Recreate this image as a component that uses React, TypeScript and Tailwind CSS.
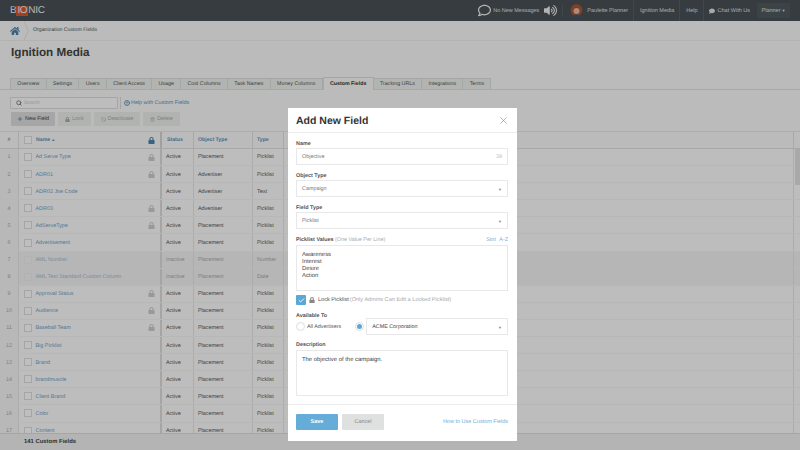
import { Search, Plus, Ban, Trash2, HelpCircle, X, Check } from "lucide-react";
import { FaHome, FaLock, FaVolumeUp, FaRegComment, FaComment } from "react-icons/fa";

const FONT = "[font-family:'Liberation_Sans',Arial,sans-serif] [text-rendering:geometricPrecision]";

const TABS = ["Overview", "Settings", "Users", "Client Access", "Usage", "Cost Columns", "Task Names", "Money Columns", "Custom Fields", "Tracking URLs", "Integrations", "Terms"];

const ROWS: { name: string; lock?: boolean; status?: string; object: string; type: string }[] = [
  { name: "Ad Serve Type", lock: true, object: "Placement", type: "Picklist" },
  { name: "ADR01", lock: true, object: "Advertiser", type: "Picklist" },
  { name: "ADR02 Joe Code", object: "Advertiser", type: "Text" },
  { name: "ADR03", lock: true, object: "Advertiser", type: "Picklist" },
  { name: "AdServeType", lock: true, object: "Placement", type: "Picklist" },
  { name: "Advertisement", object: "Placement", type: "Picklist" },
  { name: "AML Number", status: "Inactive", object: "Placement", type: "Number" },
  { name: "AML Test Standard Custom Column", status: "Inactive", object: "Placement", type: "Date" },
  { name: "Approval Status", lock: true, object: "Placement", type: "Picklist" },
  { name: "Audience", lock: true, object: "Placement", type: "Picklist" },
  { name: "Baseball Team", lock: true, object: "Placement", type: "Picklist" },
  { name: "Big Picklist", object: "Placement", type: "Picklist" },
  { name: "Brand", object: "Placement", type: "Picklist" },
  { name: "brandmuscle", object: "Placement", type: "Picklist" },
  { name: "Client Brand", object: "Placement", type: "Picklist" },
  { name: "Color", object: "Placement", type: "Picklist" },
  { name: "Content", object: "Placement", type: "Picklist" },
];

const COLS = "grid grid-cols-[19px_143px_32px_59px_31px_1fr]";

function Divider() {
  return <div className="mx-[5px] h-[21px] w-px bg-[#566065]" />;
}

function TopBar() {
  return (
    <div className="flex h-[21px] shrink-0 items-center bg-[#485055] text-[5.5px] text-[#dfe2e2]">
      <div className="ml-[10px] mt-[1px] flex items-center text-[10px] font-light leading-none tracking-[-0.3px] text-[#f0f0f0]">
        <span>B</span>
        <span className="bg-[#d9562a] px-[1px]">IO</span>
        <span>NIC</span>
      </div>
      <div className="ml-auto mr-[10px] flex h-full items-center [&>span]:pt-[2px]">
        <FaRegComment size={13} className="mr-[2px] text-[#f0f0f0]" />
        <span>No New Messages</span>
        <FaVolumeUp size={13} className="ml-[5px] text-[#f0f0f0]" />
        <div className="ml-[5px] mr-[7px] h-[12px] w-px bg-[#566065]" />
        <svg width="13" height="13" viewBox="0 0 13 13" className="mr-[4px]">
          <circle cx="6.5" cy="6" r="6" fill="#a5563a" />
          <circle cx="6.5" cy="7" r="3" fill="#e6b89c" />
          <rect x="4.5" y="10.5" width="4" height="2.5" fill="#3c5a78" />
        </svg>
        <span>Paulette Planner</span>
        <Divider />
        <span className="ml-[1px]">Ignition Media</span>
        <Divider />
        <span className="ml-[1px]">Help</span>
        <Divider />
        <FaComment size={6} className="mr-[3px]" />
        <span>Chat With Us</span>
        <div className="ml-[7px] flex h-[15px] w-[33px] items-center justify-center gap-[1px] bg-[#505a5f] pt-[1px]">
          Planner
          <span className="text-[4px]">▼</span>
        </div>
      </div>
    </div>
  );
}

function Breadcrumb() {
  return (
    <div className="flex h-[20px] shrink-0 items-center border-b border-[#ecefec] text-[5.2px] text-[#555]">
      <FaHome size={10} className="ml-[10px] text-[#4d83ad]" />
      <svg width="5" height="19" viewBox="0 0 5 19" className="ml-[4px] mr-[4px]">
        <path d="M0 0 L4.5 9.5 L0 19" fill="none" stroke="#e4e6e4" />
      </svg>
      <span className="pt-[1px]">Organization Custom Fields</span>
    </div>
  );
}

function Tabs() {
  return (
    <div className="mt-[33px] flex h-[12px] shrink-0 items-stretch border-b border-[#dfe2df] pl-[10px]">
      {TABS.map((t) => (
        <div
          key={t}
          className={`flex items-center border-r border-t border-[#dcdfdc] px-[6.3px] pt-[2px] text-[5.3px] first:border-l ${
            t === "Custom Fields" ? "relative -my-[1px] border-l bg-[#f8faf8] font-bold text-[#333]" : "bg-[#eef0ee] text-[#555]"
          }`}
        >
          {t}
        </div>
      ))}
    </div>
  );
}

function Toolbar() {
  return (
    <>
      <div className="mt-[7px] flex items-center pl-[10px]">
        <div className="flex h-[12px] w-[108px] items-center rounded-[1px] border border-[#dcdcdc] bg-[#fcfcfc] pl-[5px] text-[5px] text-[#ccc]">
          <Search size={6} strokeWidth={3} className="mr-[2px] text-[#666]" />
          <span className="pt-[1px]">Search</span>
        </div>
        <div className="ml-[2px] mr-[3px] h-[12px] w-px bg-[#dcdcdc]" />
        <HelpCircle size={6} className="mr-[1px] text-[#4d83ad]" strokeWidth={3} />
        <span className="text-[5.4px] text-[#5a93bf]">Help with Custom Fields</span>
      </div>
      <div className="mt-[3px] flex gap-[3px] pl-[11px] text-[5.4px] [&>div>span]:pt-[1px]">
        <div className="flex h-[14px] w-[44px] items-center justify-center gap-[2px] rounded-[1px] bg-[#dcdedc] text-[#444]">
          <Plus size={6} strokeWidth={3} className="text-[#4d83ad]" />
          <span>New Field</span>
        </div>
        <div className="flex h-[14px] w-[33px] items-center justify-center gap-[2px] rounded-[1px] bg-[#edefed] text-[#aaa]">
          <FaLock size={5} />
          <span>Lock</span>
        </div>
        <div className="flex h-[14px] w-[46px] items-center justify-center gap-[2px] rounded-[1px] bg-[#edefed] text-[#aaa]">
          <Ban size={5} />
          <span>Deactivate</span>
        </div>
        <div className="flex h-[14px] w-[37px] items-center justify-center gap-[2px] rounded-[1px] bg-[#edefed] text-[#aaa]">
          <Trash2 size={5} />
          <span>Delete</span>
        </div>
      </div>
    </>
  );
}

function Table() {
  return (
    <div className="relative mt-[5px] min-h-0 flex-1 overflow-hidden border-t border-[#e6e8e6]">
      <div className={`${COLS} h-[17px] border-b border-[#dfe1df] text-[5.2px] font-bold text-[#5a93bf]`}>
        <div className="flex items-center justify-center border-r border-[#dfe1df] pt-[1px] text-[#888]">#</div>
        <div className="flex items-center border-r-2 border-[#d5d7d5] pl-[5px]">
          <div className="mr-[4px] h-[8px] w-[8px] border border-[#ddd] bg-white" />
          <span className="pt-[1px]">Name</span>
          <span className="ml-[1px] text-[4px]">▲</span>
          <FaLock size={7} className="ml-auto mr-[5px] text-[#4d83ad]" />
        </div>
        <div className="flex items-center border-r border-[#dfe1df] pl-[5px] pt-[1px]">Status</div>
        <div className="flex items-center border-r border-[#dfe1df] pl-[4px] pt-[1px]">Object Type</div>
        <div className="flex items-center border-r border-[#dfe1df] pl-[4px] pt-[1px]">Type</div>
        <div className="w-[calc(100%-6px)] border-r border-[#dfe1df]" />
      </div>
      {ROWS.map((r, i) => {
        const off = r.status === "Inactive";
        return (
          <div key={r.name} className={`${COLS} h-[17.1px] border-b border-[#f4f4f4] text-[5.4px] ${off ? "bg-[#f3f3f3]" : "bg-[#fcfcfc]"}`}>
            <div className="flex items-center justify-center border-r border-[#e6e6e6] bg-[#f5f6f5] pt-[1px] text-[#aaa]">{i + 1}</div>
            <div className="flex items-center border-r-2 border-[#dcdcdc] pl-[5px]">
              <div className={`mr-[3.5px] h-[8px] w-[8px] shrink-0 border ${off ? "border-[#eee] bg-[#f4f4f4]" : "border-[#ddd] bg-white"}`} />
              <span className={`pt-[1px] ${off ? "text-[#a5c0d6]" : "text-[#72a3c9]"}`}>{r.name}</span>
              {r.lock && <FaLock size={7} className="ml-auto mr-[5px] text-[#cccccc]" />}
            </div>
            <div className={`flex items-center border-r border-[#e6e6e6] pl-[4px] pt-[1px] ${off ? "text-[#aaa]" : "text-[#555]"}`}>{r.status ?? "Active"}</div>
            <div className={`flex items-center border-r border-[#e6e6e6] pl-[4px] pt-[1px] ${off ? "text-[#aaa]" : "text-[#555]"}`}>{r.object}</div>
            <div className={`flex items-center border-r border-[#e6e6e6] pl-[4px] pt-[1px] ${off ? "text-[#aaa]" : "text-[#555]"}`}>{r.type}</div>
            <div className="w-[calc(100%-6px)] border-r border-[#e6e6e6]" />
          </div>
        );
      })}
      <div className="absolute right-0 top-[17px] h-[36px] w-[5px] bg-[#e2e2e2]" />
      <div className="absolute bottom-0 left-0 right-0 flex h-[17px] items-center border-t border-[#dcdcdc] bg-[#eff1ef] pl-[24px] pt-[1px] text-[5.9px] font-bold text-[#444]">
        141 Custom Fields
      </div>
    </div>
  );
}

function Label({ children }: { children: React.ReactNode }) {
  return <div className="h-[9px] text-[5.4px] font-bold leading-[11px] text-[#555]">{children}</div>;
}

function Select({ value, dark, className = "" }: { value: string; dark?: boolean; className?: string }) {
  return (
    <div className={`flex h-[17px] items-center justify-between border border-[#e8e8e8] px-[5px] pt-[2px] text-[5.4px] ${dark ? "text-[#444]" : "text-[#777]"} ${className}`}>
      {value}
      <span className="text-[4px] text-[#888]">▼</span>
    </div>
  );
}

function Modal() {
  return (
    <div className="absolute left-[288px] top-[108px] flex h-[333px] w-[229px] flex-col bg-white">
      <div className="flex h-[25px] shrink-0 items-center justify-between border-b border-[#ececec] pl-[8px] pr-[8px]">
        <span className="pt-[3px] text-[10.5px] font-bold text-[#333]">Add New Field</span>
        <X size={11} strokeWidth={1} className="text-[#666]" />
      </div>
      <div className="flex-1 pl-[8px] pr-[9px] pt-[6px]">
        <Label>Name</Label>
        <div className="flex h-[17px] items-center justify-between border border-[#e8e8e8] px-[5px] pt-[2px] text-[5.4px] text-[#777]">
          Objective
          <span className="text-[#bbb]">39</span>
        </div>
        <div className="mt-[6px]"><Label>Object Type</Label></div>
        <Select value="Campaign" />
        <div className="mt-[6px]"><Label>Field Type</Label></div>
        <Select value="Picklist" />
        <div className="mt-[6px] flex justify-between">
          <Label>
            Picklist Values <span className="font-normal text-[#aaa]">(One Value Per Line)</span>
          </Label>
          <span className="h-[9px] text-[5.4px] leading-[11px] text-[#72b0dc] [word-spacing:2px]">Sort A-Z</span>
        </div>
        <div className="mt-[1px] h-[46px] border border-[#e8e8e8] px-[5px] pt-[6px] text-[5.9px] leading-[7px] text-[#444]">
          Awareness<br />Interest<br />Desire<br />Action
        </div>
        <div className="mt-[4px] flex h-[10px] items-center text-[5.6px]">
          <div className="flex h-[10px] w-[10px] items-center justify-center rounded-[1px] bg-[#5ba7d6]">
            <Check size={7} strokeWidth={3} className="text-white" />
          </div>
          <FaLock size={6} className="ml-[3px] mr-[3px] text-[#888]" />
          <span className="pt-[1px] text-[#555]">Lock Picklist</span>
          <span className="ml-[1px] pt-[1px] text-[#aaa]">(Only Admins Can Edit a Locked Picklist)</span>
        </div>
        <div className="mt-[6px]"><Label>Available To</Label></div>
        <div className="mt-[-2px] flex items-center text-[5.4px] text-[#555]">
          <div className="mr-[2px] h-[9px] w-[9px] rounded-full border border-[#ddd]" />
          <span className="pt-[1px]">All Advertisers</span>
          <div className="ml-[14px] mr-[2px] flex h-[9px] w-[9px] items-center justify-center rounded-full border border-[#ddd]">
            <div className="h-[5px] w-[5px] rounded-full bg-[#5ba7d6]" />
          </div>
          <Select value="ACME Corporation" dark className="flex-1" />
        </div>
        <div className="mt-[5px]"><Label>Description</Label></div>
        <div className="mt-[1px] h-[46px] border border-[#e8e8e8] px-[5px] pt-[5px] text-[5.9px] text-[#444]">
          The objective of the campaign.
        </div>
      </div>
      <div className="flex h-[37px] shrink-0 items-center border-t border-[#ececec] pb-[3px] pl-[8px] pr-[9px] text-[5.5px]">
        <div className="flex h-[16px] w-[42px] items-center justify-center rounded-[1px] bg-[#66acd8] pt-[1px] font-bold text-white">Save</div>
        <div className="ml-[4px] flex h-[16px] w-[42px] items-center justify-center rounded-[1px] bg-[#dfe1e1] pt-[1px] text-[#888]">Cancel</div>
        <span className="ml-auto pt-[1px] text-[#72b0dc]">How to Use Custom Fields</span>
      </div>
    </div>
  );
}

export default function App() {
  return (
    <div className={`relative flex h-[450px] w-[800px] flex-col overflow-hidden bg-[#f8faf8] ${FONT}`}>
      <TopBar />
      <Breadcrumb />
      <div className="ml-[11px] mt-[4px] h-0 text-[11.7px] font-bold leading-[15px] text-[#444]">Ignition Media</div>
      <Tabs />
      <Toolbar />
      <Table />
      <div className="absolute inset-0 bg-black/25" />
      <Modal />
    </div>
  );
}
